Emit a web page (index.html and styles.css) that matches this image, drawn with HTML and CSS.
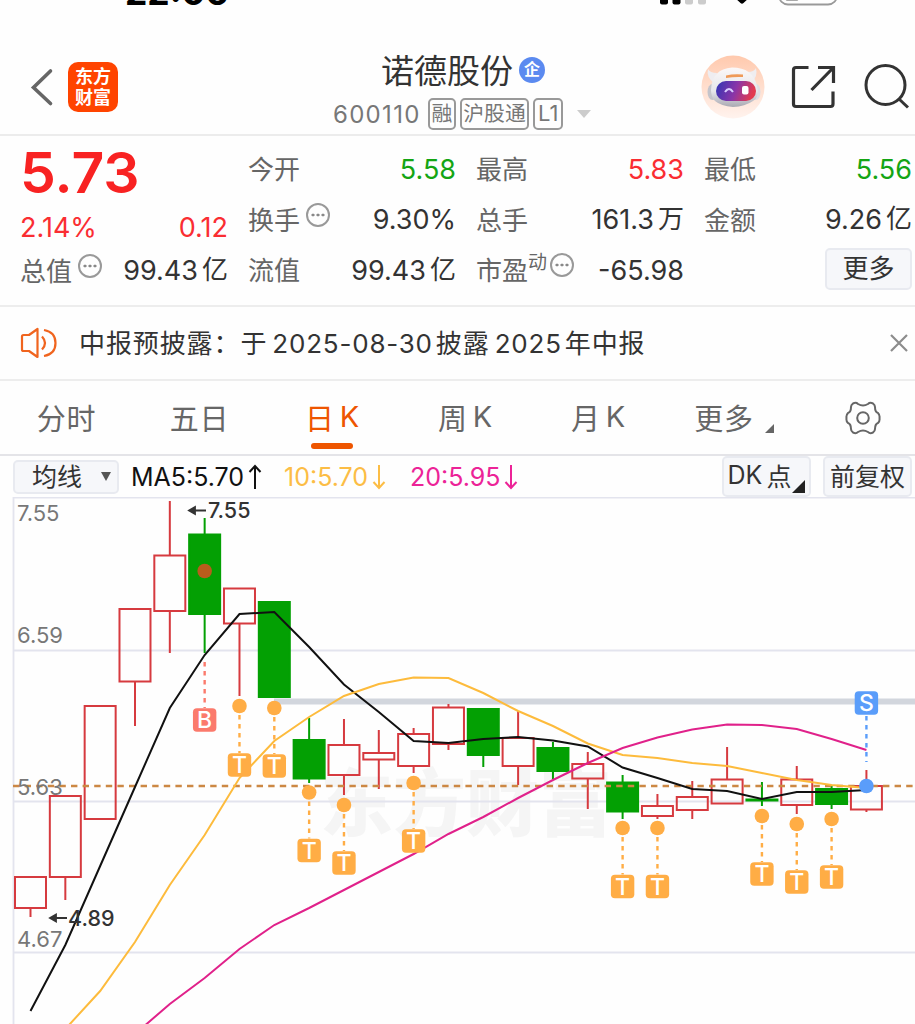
FILE: index.html
```html
<!DOCTYPE html>
<html lang="zh-CN">
<head>
    <meta charset="UTF-8">
    <meta name="viewport" content="width=device-width, initial-scale=1.0">
    <title>诺德股份 600110</title>
    <link rel="stylesheet" href="styles.css">
</head>
<body>
    <div class="status-bar">
        <span class="clock">22:06</span>
        <svg class="status-icons" width="180" height="8" viewBox="658 0 180 8">
            <rect x="660" y="-8" width="8" height="12.500" rx="2" fill="#000"/>
            <rect x="672.500" y="-8" width="8" height="12.500" rx="2" fill="#000"/>
            <rect x="685" y="-8" width="8" height="12.500" rx="2" fill="#ccc"/>
            <rect x="698" y="-8" width="8" height="12.500" rx="2" fill="#ccc"/>
            <path d="M734-3h16l-6.500 6q-1.500 1.600-3 0z" fill="#000"/>
            <rect x="779" y="-20" width="58" height="24.500" rx="9" fill="none" stroke="#999" stroke-width="1.800"/>
            <rect x="784" y="-15" width="16" height="15.500" rx="4" fill="#555"/>
        </svg>
    </div>

    <header class="header">
        <div class="header-left">
            <svg class="back" width="24" height="40" viewBox="0 0 24 40">
                <path d="M20.500 4 3.500 20.500l17 16" fill="none" stroke="#666" stroke-width="3.600" stroke-linecap="round"/>
            </svg>
            <div class="logo"><span>东方</span><span>财富</span></div>
        </div>
        <div class="header-title">
            <div class="name">诺德股份<span class="badge">企</span></div>
            <div class="code">
                <span class="number">600110</span>
                <span class="tag">融</span>
                <span class="tag">沪股通</span>
                <span class="tag level">L1</span>
                <i class="caret"></i>
            </div>
        </div>
        <div class="header-right">
            <svg width="64" height="64" viewBox="0 0 64 64">
                <defs>
                    <linearGradient id="peach" x1="0" y1="0" x2="0" y2="1">
                        <stop offset="0" stop-color="#ffc9ad"/>
                        <stop offset="1" stop-color="#fff3ee"/>
                    </linearGradient>
                    <linearGradient id="visor" x1="0" y1="0" x2="1" y2=".2">
                        <stop offset="0" stop-color="#2f35b5"/>
                        <stop offset=".55" stop-color="#8a35a8"/>
                        <stop offset="1" stop-color="#e23a50"/>
                    </linearGradient>
                    <linearGradient id="shell" x1="0" y1="0" x2="0" y2="1">
                        <stop offset="0" stop-color="#fbf8f8"/>
                        <stop offset=".6" stop-color="#e6e6ea"/>
                        <stop offset="1" stop-color="#a9a9b2"/>
                    </linearGradient>
                </defs>
                <circle cx="32" cy="32" r="31.500" fill="url(#peach)"/>
                <path d="M7 14q2 4 9 4l-3 10Q5 22 7 14zM55 13q-2 4-8 4l4 10q6-6 4-14z" fill="#efedf0"/>
                <ellipse cx="11.500" cy="37" rx="5" ry="8" fill="#c4c4cb"/>
                <ellipse cx="55" cy="37" rx="4.500" ry="8" fill="#dedee4"/>
                <path d="M10 35Q11 14 31 12.500q21 0 25 18.500 3 11-4 15-8 5.500-20 6-12-1-18-6-4-4-4-11z" fill="url(#shell)"/>
                <path d="M25 20.500q8-2 17-1v2.500q-9-.5-17 1z" fill="#ef9a58"/>
                <rect x="15" y="26" width="40" height="20" rx="10" fill="url(#visor)"/>
                <path d="M24 37q4-6 8 0" fill="none" stroke="#d9ccff" stroke-width="2"/>
                <rect x="41" y="31" width="6.500" height="8.500" rx="2" fill="#fff"/>
            </svg>
            <svg width="46" height="46" viewBox="0 0 46 46" fill="none" stroke="#333" stroke-width="3.200">
                <path d="M17.500 3.500H5Q2.500 3.500 2.500 6v34q0 2.500 2.500 2.500h34.500q2.500 0 2.500-2.500V27.500M27 3.500h15.500V19M42 4 20.500 26"/>
            </svg>
            <svg width="46" height="46" viewBox="0 0 46 46" fill="none" stroke="#333" stroke-width="3">
                <circle cx="22.500" cy="21" r="19.500"/>
                <path d="m35.500 34.500 9.500 9"/>
            </svg>
        </div>
    </header>

    <section class="quote">
        <div class="col">
            <div class="price">5.73</div>
            <div class="row change"><b class="value red">2.14%</b><b class="value red">0.12</b></div>
            <div class="row total"><span class="label">总值<i class="more-dot"></i></span><b class="value">99.43<em>亿</em></b></div>
        </div>
        <div class="col">
            <div class="row"><span class="label">今开</span><b class="value green">5.58</b></div>
            <div class="row"><span class="label">换手<i class="more-dot"></i></span><b class="value">9.30%</b></div>
            <div class="row"><span class="label">流值</span><b class="value">99.43<em>亿</em></b></div>
        </div>
        <div class="col">
            <div class="row"><span class="label">最高</span><b class="value red">5.83</b></div>
            <div class="row"><span class="label">总手</span><b class="value">161.3<em>万</em></b></div>
            <div class="row"><span class="label">市盈<small>动</small><i class="more-dot tight"></i></span><b class="value">-65.98</b></div>
        </div>
        <div class="col">
            <div class="row"><span class="label">最低</span><b class="value green">5.56</b></div>
            <div class="row"><span class="label">金额</span><b class="value">9.26<em>亿</em></b></div>
            <div class="row end"><button class="more-btn">更多</button></div>
        </div>
    </section>

    <section class="notice">
        <svg width="38" height="32" viewBox="0 0 38 32" fill="none" stroke="#f0641e" stroke-width="2.200" stroke-linejoin="round">
            <path d="M17.500 2v28L9 24H3.500q-1.500 0-1.500-1.500v-13Q2 8 3.500 8H9z"/>
            <path d="M22 9.500q6 6.500 0 13M24 3q11.500 2 11.500 13T24 29"/>
        </svg>
        <p>中报预披露：于<span>2025-08-30</span>披露<span>2025</span>年中报</p>
        <svg width="18" height="18" viewBox="0 0 18 18" stroke="#8c8c8c" stroke-width="2.200">
            <path d="m1 1 16 16M17 1 1 17"/>
        </svg>
    </section>

    <nav class="tabs">
        <a class="tab">分时</a>
        <a class="tab">五日</a>
        <a class="tab active">日<span>K</span></a>
        <a class="tab">周<span>K</span></a>
        <a class="tab">月<span>K</span></a>
        <a class="tab more">更多<i class="corner"></i></a>
        <a class="tab settings">
            <svg width="36" height="34" viewBox="-18 -17 36 34" fill="none" stroke="#666" stroke-width="2">
                <path d="M-10-14.500Q-7-16-5-14 0-11 5-14 7-16 10-14.500 12-13 12-11 12-6 15-5 17-3 16.500 0 17 3 15 5 12 6 12 11 12 13 10 14.500 7 16 5 14 0 11-5 14-7 16-10 14.500-12 13-12 11-12 6-15 5-17 3-16.500 0-17-3-15-5-12-6-12-11-12-13-10-14.500z"/>
                <circle r="5.800"/>
            </svg>
        </a>
    </nav>

    <div class="toolbar">
        <button class="tool ma-select">均线<i class="down"></i></button>
        <span class="ma ma5">MA5:5.70<svg width="14" height="26" viewBox="0 0 14 26"><path d="M7 25V2M1.500 8 7 2l5.500 6"/></svg></span>
        <span class="ma ma10">10:5.70<svg width="14" height="26" viewBox="0 0 14 26"><path d="M7 1v23M1.500 18 7 24l5.500-6"/></svg></span>
        <span class="ma ma20">20:5.95<svg width="14" height="26" viewBox="0 0 14 26"><path d="M7 1v23M1.500 18 7 24l5.500-6"/></svg></span>
        <button class="tool dk">DK<span>点</span><i class="corner"></i></button>
        <button class="tool adjust">前复权</button>
    </div>

    <svg class="chart" id="chart" width="915" height="527" viewBox="0 497 915 527">
        <text class="watermark" x="320" y="830">东方财富</text>
        <path class="grid" d="M915 497.500H13.500V1024M13 650.500H915M13 801.500H915M13 952.500H915"/>
        <path class="band" d="M274 701.500H915"/>
        <g id="candles"></g>
        <path class="current" d="M13 786H915"/>
        <g id="averages"></g>
        <g id="signals"></g>
        <text class="axis" x="17" y="521">7.55</text>
        <text class="axis" x="17" y="643">6.59</text>
        <text class="axis" x="17" y="795">5.63</text>
        <text class="axis" x="17" y="947">4.67</text>
        <path class="pointer" d="M190 510.500h16M195 507l-6 3.500 6 3.500zM51 918h16M56 914.500l-6 3.500 6 3.500z"/>
        <text class="extreme" x="208" y="518">7.55</text>
        <text class="extreme" x="68" y="925.500">4.89</text>
    </svg>

    <script src="chart.js"></script>
</body>
</html>
```
FILE: styles.css
```css
* {
    box-sizing: border-box;
}

body {
    margin: 0;
    width: 915px;
    height: 1024px;
    overflow: hidden;
    background: #fefefe;
    color: #333;
    font-family: Inter, "Noto Sans CJK SC", sans-serif;
}

button {
    padding: 0;
    font-family: inherit;
    color: #333;
    background: #f6f7fa;
    border: 2px solid #e8eaf0;
    border-radius: 5px;
}

/* status bar */
.status-bar {
    display: flex;
    justify-content: space-between;
    align-items: flex-start;
    height: 18px;
    padding: 0 77px 0 125px;
    overflow: hidden;
}

.clock {
    margin-top: -32px;
    font-size: 35.5px;
    line-height: 50px;
    font-weight: 700;
    color: #000;
}

/* header */
.header {
    display: flex;
    height: 118px;
    border-bottom: 2px solid #ececec;
}

.header-left {
    display: flex;
    align-items: center;
    width: 320px;
    height: 98px;
    margin-top: 20px;
    padding-left: 30px;
    gap: 14px;
}

.logo {
    display: flex;
    flex-direction: column;
    align-items: center;
    justify-content: center;
    width: 50px;
    height: 50px;
    border-radius: 10px;
    background: #ff4400;
    color: #fff;
    font-size: 18px;
    line-height: 21px;
    font-weight: 700;
}

.header-title {
    width: 286px;
    padding-top: 27px;
}

.name {
    display: flex;
    align-items: center;
    justify-content: center;
    height: 48px;
    color: #333;
    font-size: 33px;
}

.badge {
    width: 26px;
    height: 26px;
    margin: 1px 0 0 6px;
    border-radius: 50%;
    background: #5b8af0;
    color: #fff;
    font-size: 16px;
    line-height: 25px;
    font-weight: 700;
    text-align: center;
}

.code {
    display: flex;
    align-items: center;
    height: 40px;
    margin-top: 1px;
    padding-left: 13px;
    gap: 4px;
    color: #777;
}

.number {
    width: 91px;
    font-size: 24px;
    letter-spacing: 1.3px;
}

.tag {
    height: 32px;
    padding: 0 1.5px;
    border: 2px solid #999;
    border-radius: 5px;
    font-size: 20.8px;
    line-height: 27px;
}

.level {
    width: 30px;
    font-size: 22px;
    text-align: center;
}

.caret {
    margin-left: 10px;
    border: 7px solid transparent;
    border-top: 8px solid #ccc;
    border-bottom: 0;
}

.header-right {
    display: flex;
    align-items: center;
    flex: none;
    height: 98px;
    margin-top: 20px;
    padding-left: 95px;
    gap: 26px;
}

/* quote */
.quote {
    display: grid;
    grid-template-columns: repeat(4, 208px);
    column-gap: 20px;
    height: 171px;
    padding: 8px 0 0 20px;
    border-bottom: 2px solid #ededed;
}

.price {
    height: 60px;
    font-size: 57px;
    line-height: 58px;
    font-weight: 600;
    color: #f82222;
}

.row {
    display: flex;
    align-items: center;
    justify-content: space-between;
    height: 50.5px;
}

.change {
    height: 47px;
}

.total {
    height: 39px;
}

.end {
    justify-content: flex-end;
}

.label {
    display: flex;
    align-items: center;
    margin-top: -3px;
    color: #666;
    font-size: 26px;
}

.label small {
    margin-top: -16px;
    font-size: 19px;
}

.value {
    padding-top: 1px;
    font-size: 27px;
    line-height: 40px;
    font-weight: 400;
}

.value em {
    position: relative;
    top: -1px;
    margin-left: 4px;
    font-style: normal;
    font-size: 26px;
}

.red {
    color: #fa2d32;
}

.green {
    color: #14a514;
}

.more-dot {
    width: 24px;
    height: 24px;
    margin: -7px 0 0 6px;
    padding: 0 3px;
    border: 2px solid #999;
    border-radius: 50%;
    background: radial-gradient(circle, #888 1.2px, transparent 1.8px) center / 5px 20px repeat-x;
    background-clip: content-box;
}

.tight {
    margin-left: 3px;
}

.more-btn {
    width: 87px;
    height: 42px;
    margin-top: -2px;
    font-size: 26px;
    line-height: 36px;
}

/* notice */
.notice {
    display: flex;
    align-items: center;
    height: 74px;
    padding: 0 7px 0 20px;
    border-bottom: 2px solid #ededed;
}

.notice p {
    flex: 1;
    margin: -4px 0 0 21px;
    font-size: 26px;
    letter-spacing: 0.9px;
}

.notice span {
    margin: 0 3px 0 5px;
    font-size: 26px;
    letter-spacing: 0.8px;
}

/* tabs */
.tabs {
    display: flex;
    height: 75px;
    border-bottom: 2px solid #e4e4e8;
}

.tab {
    display: flex;
    align-items: center;
    justify-content: center;
    flex: none;
    width: 133px;
    padding-bottom: 2px;
    color: #666;
    font-size: 29px;
    letter-spacing: 0.8px;
}

.tab span {
    margin-left: 5px;
}

.active {
    position: relative;
    color: #ee5500;
}

.active::after {
    content: "";
    position: absolute;
    left: 45px;
    bottom: 5px;
    width: 42px;
    height: 6px;
    border-radius: 3px;
    background: #ee5500;
}

.more {
    padding-left: 5px;
}

.settings {
    padding: 0 4px 0 0;
}

.corner {
    align-self: flex-end;
    margin: 0 0 19px 11px;
    border-left: 9px solid transparent;
    border-bottom: 9px solid #666;
}

/* toolbar */
.toolbar {
    display: flex;
    align-items: center;
    height: 41px;
    padding: 0 3px 0 13px;
}

.tool {
    display: flex;
    align-items: center;
    justify-content: center;
    height: 41px;
    padding-bottom: 3px;
    font-size: 25px;
}

.ma-select {
    width: 106px;
    height: 34px;
    margin-right: 12px;
    padding-left: 11px;
}

.down {
    margin: 2px 0 0 19px;
    border: 5px solid transparent;
    border-top: 9px solid #555;
    border-bottom: 0;
}

.ma {
    display: flex;
    align-items: center;
    gap: 4px;
    font-size: 25px;
    white-space: nowrap;
}

.ma path {
    fill: none;
    stroke: currentColor;
    stroke-width: 2;
}

.ma5 {
    width: 153px;
    color: #111;
}

.ma10 {
    width: 126px;
    color: #fcbd45;
}

.ma20 {
    color: #ec2397;
}

.dk {
    width: 89px;
    margin-left: auto;
}

.dk span {
    margin-left: 4px;
}

.dk .corner {
    margin: 0 0 -1px 1px;
    border-left-width: 13px;
    border-bottom: 13px solid #222;
}

.adjust {
    width: 89px;
    margin-left: 12px;
}

/* chart */
.chart {
    display: block;
}

.watermark {
    font-size: 73px;
    font-weight: 900;
    fill: #f5f5f5;
}

.grid {
    fill: none;
    stroke: #e3e4ee;
    stroke-width: 1.8;
}

.band {
    stroke: #d2d6dd;
    stroke-width: 6;
}

.up {
    fill: none;
    stroke: #d63a3f;
    stroke-width: 2;
}

.fall {
    fill: #03a003;
    stroke: #03a003;
    stroke-width: 2;
}

.current {
    stroke: #cc8844;
    stroke-width: 2.4;
    stroke-dasharray: 6.4 5.2;
}

.line {
    fill: none;
    stroke-width: 2;
}

.line5 {
    stroke: #111;
}

.line10 {
    stroke: #fdbb3c;
}

.line20 {
    stroke: #e0218a;
}

.stem {
    stroke-width: 2.4;
    stroke-dasharray: 4.5 4.5;
}

.signal {
    font-size: 23px;
    font-weight: 500;
    fill: #fff;
    text-anchor: middle;
}

.axis {
    font-size: 22px;
    fill: #777;
}

.pointer {
    fill: #333;
    stroke: #333;
    stroke-width: 1.8;
}

.extreme {
    font-size: 21.5px;
    font-weight: 500;
    fill: #333;
}
```
FILE: chart.js
```js
const NS = 'http://www.w3.org/2000/svg';
const FIRST = 30.5;
const STEP = 34.83;

// [direction, high, body top, body bottom, low]
const candles = [
    ['up', 877, 877, 908, 917],
    ['up', 796, 796, 877, 900],
    ['up', 706, 706, 819, 819],
    ['up', 609, 609, 681.5, 726],
    ['up', 501, 555.5, 611, 653],
    ['fall', 518, 534.5, 614, 653],
    ['up', 588.5, 588.5, 623.5, 696],
    ['fall', 602, 602, 697, 697],
    ['fall', 718, 740, 778.5, 783],
    ['up', 719, 745, 775, 795],
    ['up', 730, 753, 759.5, 789],
    ['up', 728, 734, 766, 773],
    ['up', 704, 707.5, 744, 750],
    ['fall', 709, 709, 755, 767],
    ['up', 711, 738, 766, 785],
    ['fall', 742, 748, 771, 779],
    ['up', 752, 764, 778.5, 809],
    ['fall', 775, 782.5, 811.5, 819],
    ['up', 794, 806, 816, 819],
    ['up', 781, 797, 810, 819],
    ['up', 747, 779.5, 803.5, 803.5],
    ['fall', 782, 799.5, 800.5, 806],
    ['up', 766, 779.5, 805, 814],
    ['fall', 786, 789, 804, 809],
    ['up', 770, 786, 809.5, 812]
];

const averages = {
    line5: [1011, 945, 866, 787, 708, 655, 614, 612, 647, 684.5, 712, 741, 743, 739, 737, 740.5, 746.5, 767.5, 778, 789, 791, 799, 792, 792, 790],
    line10: [1066, 1029, 991, 942, 885, 835, 778, 741, 717, 696, 684, 677.5, 678, 693, 711, 726, 743.5, 755, 758, 763, 766, 773, 780, 785, 788],
    line20: [1125, 1095, 1064, 1034, 1004, 978, 949, 925, 908, 890, 872, 854, 834, 817, 798, 780, 763, 748, 737.5, 729.5, 724.5, 725, 729, 739, 750]
};

// [candle, letter, dot y, box y, colour]
const signals = [
    [5, 'B', 571, 720, '#fb7a6c'],
    [6, 'T', 706, 765, '#ffad45'],
    [7, 'T', 708, 766, '#ffad45'],
    [8, 'T', 792.5, 850.5, '#ffad45'],
    [9, 'T', 805, 863, '#ffad45'],
    [11, 'T', 783, 841, '#ffad45'],
    [17, 'T', 828, 886.5, '#ffad45'],
    [18, 'T', 828, 886.5, '#ffad45'],
    [21, 'T', 816, 874, '#ffad45'],
    [22, 'T', 824, 882, '#ffad45'],
    [23, 'T', 819, 877, '#ffad45'],
    [24, 'S', 786, 703, '#5a9dfa']
];

function xOf(i) {
    return FIRST + i * STEP;
}

function add(parent, tag, attrs, text) {
    const el = document.createElementNS(NS, tag);
    for (const key in attrs) {
        el.setAttribute(key, attrs[key]);
    }
    if (text) {
        el.textContent = text;
    }
    parent.appendChild(el);
}

const candleGroup = document.getElementById('candles');
candles.forEach(([dir, high, top, bottom, low], i) => {
    const x = xOf(i);
    add(candleGroup, 'path', { class: dir, d: `M${x} ${high}V${top}M${x} ${bottom}V${low}` });
    add(candleGroup, 'rect', { class: dir, x: x - 15.5, y: top, width: 31, height: bottom - top });
});

const averageGroup = document.getElementById('averages');
for (const name in averages) {
    const points = averages[name].map((y, i) => `${xOf(i)},${y}`).join(' ');
    add(averageGroup, 'polyline', { class: 'line ' + name, points: points });
}

const signalGroup = document.getElementById('signals');
signals.forEach(([i, letter, dot, box, color]) => {
    const x = xOf(i);
    let from = dot;
    let to = box - 12;
    if (letter === 'B') {
        from = 662;
    }
    if (letter === 'S') {
        from = box + 13;
        to = 762;
    }
    add(signalGroup, 'path', { class: 'stem', stroke: color, d: `M${x} ${from}V${to}` });
    add(signalGroup, 'circle', { cx: x, cy: dot, r: 7.3, fill: letter === 'B' ? '#b85c1c' : color });
    add(signalGroup, 'rect', { x: x - 11.7, y: box - 11.7, width: 23.4, height: 23.4, rx: 4, fill: color });
    add(signalGroup, 'text', { class: 'signal', x: x, y: box + 8.3 }, letter);
});
```
